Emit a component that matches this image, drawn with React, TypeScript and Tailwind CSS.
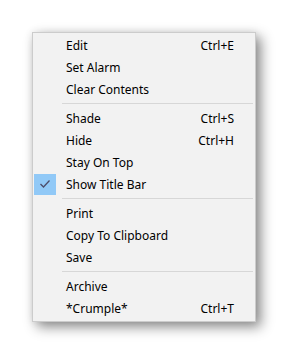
import React from 'react';

type Item = { label: string; shortcut?: string; checked?: boolean } | 'sep';

const items: Item[] = [
  { label: 'Edit', shortcut: 'Ctrl+E' },
  { label: 'Set Alarm' },
  { label: 'Clear Contents' },
  'sep',
  { label: 'Shade', shortcut: 'Ctrl+S' },
  { label: 'Hide', shortcut: 'Ctrl+H' },
  { label: 'Stay On Top' },
  { label: 'Show Title Bar', checked: true },
  'sep',
  { label: 'Print' },
  { label: 'Copy To Clipboard' },
  { label: 'Save' },
  'sep',
  { label: 'Archive' },
  { label: '*Crumple*', shortcut: 'Ctrl+T' },
];

const App: React.FC = () => {
  return (
    <div className="min-h-screen bg-white pt-8 pl-8" style={{ fontFamily: '"Noto Sans", "Open Sans", sans-serif' }}>
      {/* Context menu */}
      <div className="w-[224px] bg-[#f2f2f2] border border-[#cccccc] pt-px pb-[2px] shadow-[5px_5px_12px_rgba(0,0,0,0.45),0_0_8px_rgba(0,0,0,0.08)]">
        {items.map((item, i) =>
          item === 'sep' ? (
            <div key={i} className="h-[7px] flex items-center pl-[29px] pr-[2px]">
              <div className="h-px w-full bg-[#d7d7d7]" />
            </div>
          ) : (
            <div key={i} className="h-[22px] flex items-center text-[12px] text-black">
              <div className="w-[33px] flex justify-end">
                {item.checked ? (
                  <div className="w-[22px] h-[21px] mr-[10px] bg-[#91c9f7] flex items-center justify-center">
                    <svg width="12" height="10" viewBox="0 0 12 10">
                      <path d="M1.5 5 L4.5 8 L10.5 1.5" fill="none" stroke="#4d4d6b" strokeWidth="1.3" />
                    </svg>
                  </div>
                ) : null}
              </div>
              <span className="flex-1 leading-none pt-[2px]">{item.label}</span>
              {item.shortcut && <span className="pr-[21px] leading-none pt-[2px]">{item.shortcut}</span>}
            </div>
          )
        )}
      </div>
    </div>
  );
};

export default App;
